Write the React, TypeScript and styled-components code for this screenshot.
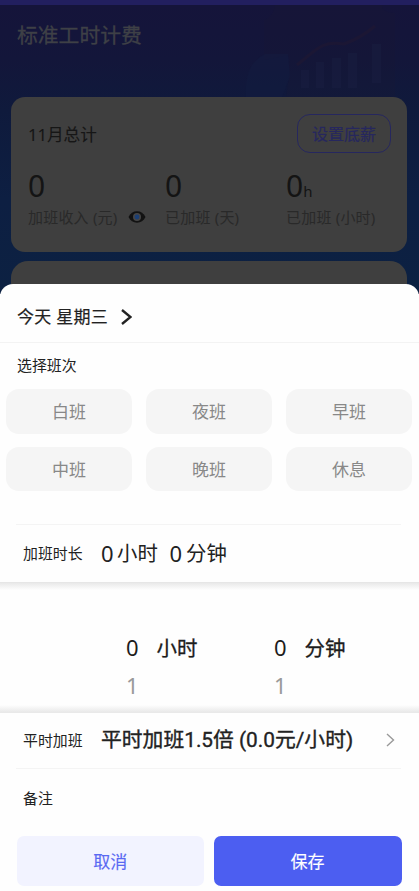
import React from "react";
import styled, { createGlobalStyle } from "styled-components";

const GlobalStyle = createGlobalStyle`
  * { box-sizing: border-box; }
  body {
    margin: 0;
    font-family: "Noto Sans", "Noto Sans CJK SC", sans-serif;
    overflow: hidden;
  }
  button { font-family: inherit; border: 0; padding: 0; }
`;

const Screen = styled.main`
  width: 419px;
  height: 891px;
  overflow: hidden;
  display: flex;
  flex-direction: column;
  background: #fefefe;
`;

const Backdrop = styled.section`
  height: 294px;
  flex: none;
  position: relative;
  display: flex;
  flex-direction: column;
  background: linear-gradient(180deg, #15143a 5px, #13163a 60px, #0f1a3c 110px, #0d1f42 200px, #0c2142 294px);
`;

const StatusStrip = styled.div`
  height: 5px;
  background: #221f5f;
`;

const HeaderArt = styled.svg`
  position: absolute;
  left: 240px;
  top: 0;
  opacity: 0.65;
`;

const PageTitle = styled.h1`
  margin: 0;
  height: 92px;
  padding: 15px 0 0 17px;
  font-size: 20.8px;
  line-height: 31px;
  font-weight: 400;
  color: #3e4046;
  -webkit-text-stroke: 0.3px #3e4046;
`;

const SummaryCard = styled.article`
  margin: 0 12px 0 11px;
  height: 154.5px;
  border-radius: 14px;
  background: #3f3f3f;
  position: relative;
`;

const NextCard = styled(SummaryCard)`
  margin-top: 9.5px;
  height: 33px;
  border-radius: 17px 17px 0 0;
`;

const CardHead = styled.div`
  display: flex;
  justify-content: space-between;
  align-items: flex-start;
  padding: 17px 16px 0 17px;
  height: 73px;
`;

const CardTitle = styled.h2`
  margin: 7px 0 0;
  font-size: 16.6px;
  line-height: 27px;
  font-weight: 400;
  color: #161616;
  -webkit-text-stroke: 0.1px #161616;
`;

const SalaryButton = styled.button`
  width: 94px;
  height: 39px;
  border: 1.5px solid #26275e;
  border-radius: 13px;
  background: transparent;
  color: #26275e;
  font-size: 16px;
  line-height: 36px;
  padding-top: 1px;
  -webkit-text-stroke: 0.2px #26275e;
`;

const Stats = styled.div`
  display: grid;
  grid-template-columns: 137px 121px 1fr;
  padding-left: 17px;
`;

const StatValue = styled.div`
  height: 34px;
  font-size: 30px;
  line-height: 32px;
  color: #141414;
`;

const ValueSuffix = styled.span`
  font-size: 15px;
  line-height: 1;
`;

const StatLabel = styled.div`
  display: flex;
  align-items: center;
  gap: 10px;
  margin-top: 2px;
  font-size: 15px;
  line-height: 22px;
  letter-spacing: 0.2px;
  color: #292929;
  white-space: nowrap;
`;

const Sheet = styled.section`
  position: relative;
  flex: 1;
  margin-top: -10.5px;
  border-radius: 13px 13px 0 0;
  background: #fefefe;
  color: #222;
  display: flex;
  flex-direction: column;
`;

const DateBar = styled.header`
  display: flex;
  align-items: center;
  gap: 13px;
  height: 59.5px;
  padding: 9px 0 0 17px;
  border-bottom: 1px solid #f3f3f3;
  font-size: 17px;
  line-height: 26px;
  letter-spacing: 0.25px;
  -webkit-text-stroke: 0.2px #222;
`;

const SectionLabel = styled.h3`
  margin: 10px 0 0 17px;
  height: 36px;
  font-size: 14.9px;
  line-height: 24px;
  font-weight: 400;
`;

const ShiftGrid = styled.div`
  display: grid;
  grid-template-columns: repeat(3, 126px);
  grid-auto-rows: 44.5px;
  gap: 13px 14px;
  padding-left: 6px;
  height: 135px;
`;

const ShiftButton = styled.button`
  border-radius: 13px;
  background: #f5f5f5;
  color: #888;
  font-size: 17px;
  line-height: 42px;
  padding-top: 2px;
`;

const Row = styled.div<{ $height: number; $lined?: boolean }>`
  margin: 0 18px 0 16px;
  padding: 0 6px 1px 7px;
  height: ${(p) => p.$height}px;
  border-top: ${(p) => (p.$lined ? "1.5px solid #f4f4f4" : "0")};
  display: flex;
  align-items: center;
`;

const RowLabel = styled.span`
  width: 78px;
  flex: none;
  font-size: 14.9px;
  line-height: 24px;
`;

const Duration = styled.span`
  display: flex;
  align-items: center;
  font-size: 20.4px;
  line-height: 30px;
  color: #222;
`;

const Digit = styled.span<{ $width: number }>`
  width: ${(p) => p.$width}px;
  font-size: 22px;
`;

const Unit = styled.span`
  width: 52.5px;
`;

const Picker = styled.div`
  height: 131px;
  border-top: 1px solid #e6e6e6;
  border-bottom: 1px solid #e9e9e9;
  background: linear-gradient(180deg, #e9e9e9 0, #fefefe 7px, #fefefe 122px, #e9e9e9 129px);
  display: grid;
  grid-template-columns: 148px 148px;
  padding: 45px 0 0 126px;
`;

const PickerColumn = styled.div`
  display: grid;
  grid-template-columns: 30.5px 1fr;
  grid-auto-rows: 38px;
  line-height: 38px;
`;

const PickerValue = styled.span<{ $muted?: boolean }>`
  font-size: 22px;
  color: ${(p) => (p.$muted ? "#999" : "#1c1c1c")};
`;

const PickerUnit = styled.span`
  font-size: 20.5px;
  color: #1c1c1c;
  padding-top: 1px;
  -webkit-text-stroke: 0.3px #1c1c1c;
`;

const Rate = styled.span`
  flex: 1;
  white-space: nowrap;
  font-family: Roboto, "Noto Sans CJK SC", sans-serif;
  font-size: 20.8px;
  line-height: 30px;
  -webkit-text-stroke: 0.35px #222;
`;

const Actions = styled.footer`
  display: grid;
  grid-template-columns: 187.5px 188px;
  gap: 9.5px;
  height: 49.5px;
  padding-left: 16.5px;
  margin-top: 7.5px;
`;

const ActionButton = styled.button<{ $primary?: boolean }>`
  border-radius: 7px;
  font-size: 17px;
  line-height: 47px;
  padding-top: 2px;
  background: ${(p) => (p.$primary ? "#4c5ef1" : "#f2f3ff")};
  color: ${(p) => (p.$primary ? "#fff" : "#5968f2")};
  -webkit-text-stroke: 0.15px currentColor;
`;

const shifts = ["白班", "夜班", "早班", "中班", "晚班", "休息"];

function EyeIcon() {
  return (
    <svg width="18" height="12" viewBox="0 0 18 12">
      <path d="M.5 6C2.3 2.2 5.2.3 9 .3S15.700 2.200 17.500 6C15.700 9.800 12.800 11.700 9 11.700S2.300 9.800.5 6Z" fill="#121212" />
      <circle cx="9" cy="6" r="4" fill="#464646" />
      <circle cx="9" cy="6" r="2.4" fill="#1b3f75" />
    </svg>
  );
}

function Chevron({ width, height, color, stroke }: { width: number; height: number; color: string; stroke: number }) {
  return (
    <svg width={width} height={height} viewBox={`0 0 ${width} ${height}`} fill="none">
      <path d={`M1 1L${width - 1.5} ${height / 2}L1 ${height - 1}`} stroke={color} strokeWidth={stroke} />
    </svg>
  );
}

function Chart() {
  return (
    <HeaderArt width="170" height="97" viewBox="0 0 170 97" fill="none">
      <path d="M35 5H143Q140 12 155 13V97H46Q52 60 48 55L24 60V20Q33 18 35 5Z" fill="#1b1838" opacity=".4" />
      <path d="M6 97Q4 63 25 54H48L50 76L42 97Z" fill="#142044" opacity=".5" />
      <path d="M61 70h8v18h-8zM76 62h8v26h-8zM92 58h9v30h-9zM108 53h9v35h-9zM132 44h9v39h-9z" fill="#1b2142" opacity=".7" />
      <path d="M57 65C76 50 82 40 104 44Q121 38 135 26" stroke="#201832" strokeWidth="3" />
    </HeaderArt>
  );
}

export default function App() {
  return (
    <Screen>
      <GlobalStyle />
      <Backdrop>
        <StatusStrip />
        <Chart />
        <PageTitle>标准工时计费</PageTitle>
        <SummaryCard>
          <CardHead>
            <CardTitle>11月总计</CardTitle>
            <SalaryButton>设置底薪</SalaryButton>
          </CardHead>
          <Stats>
            <div>
              <StatValue>0</StatValue>
              <StatLabel>加班收入 (元)<EyeIcon /></StatLabel>
            </div>
            <div>
              <StatValue>0</StatValue>
              <StatLabel>已加班 (天)</StatLabel>
            </div>
            <div>
              <StatValue>0<ValueSuffix>h</ValueSuffix></StatValue>
              <StatLabel>已加班 (小时)</StatLabel>
            </div>
          </Stats>
        </SummaryCard>
        <NextCard />
      </Backdrop>
      <Sheet>
        <DateBar>
          今天 星期三
          <Chevron width={11} height={16} color="#222" stroke={2.4} />
        </DateBar>
        <SectionLabel>选择班次</SectionLabel>
        <ShiftGrid>
          {shifts.map((shift) => (
            <ShiftButton key={shift}>{shift}</ShiftButton>
          ))}
        </ShiftGrid>
        <Row $height={58} $lined>
          <RowLabel>加班时长</RowLabel>
          <Duration>
            <Digit $width={16}>0</Digit>
            <Unit>小时</Unit>
            <Digit $width={16.5}>0</Digit>
            <Unit>分钟</Unit>
          </Duration>
        </Row>
        <Picker>
          {["小时", "分钟"].map((unit) => (
            <PickerColumn key={unit}>
              <PickerValue>0</PickerValue>
              <PickerUnit>{unit}</PickerUnit>
              <PickerValue $muted>1</PickerValue>
            </PickerColumn>
          ))}
        </Picker>
        <Row $height={54.5}>
          <RowLabel>平时加班</RowLabel>
          <Rate>平时加班1.5倍 (0.0元/小时)</Rate>
          <Chevron width={9} height={14} color="#999" stroke={1.4} />
        </Row>
        <Row $height={61} $lined>
          <RowLabel>备注</RowLabel>
        </Row>
        <Actions>
          <ActionButton>取消</ActionButton>
          <ActionButton $primary>保存</ActionButton>
        </Actions>
      </Sheet>
    </Screen>
  );
}
